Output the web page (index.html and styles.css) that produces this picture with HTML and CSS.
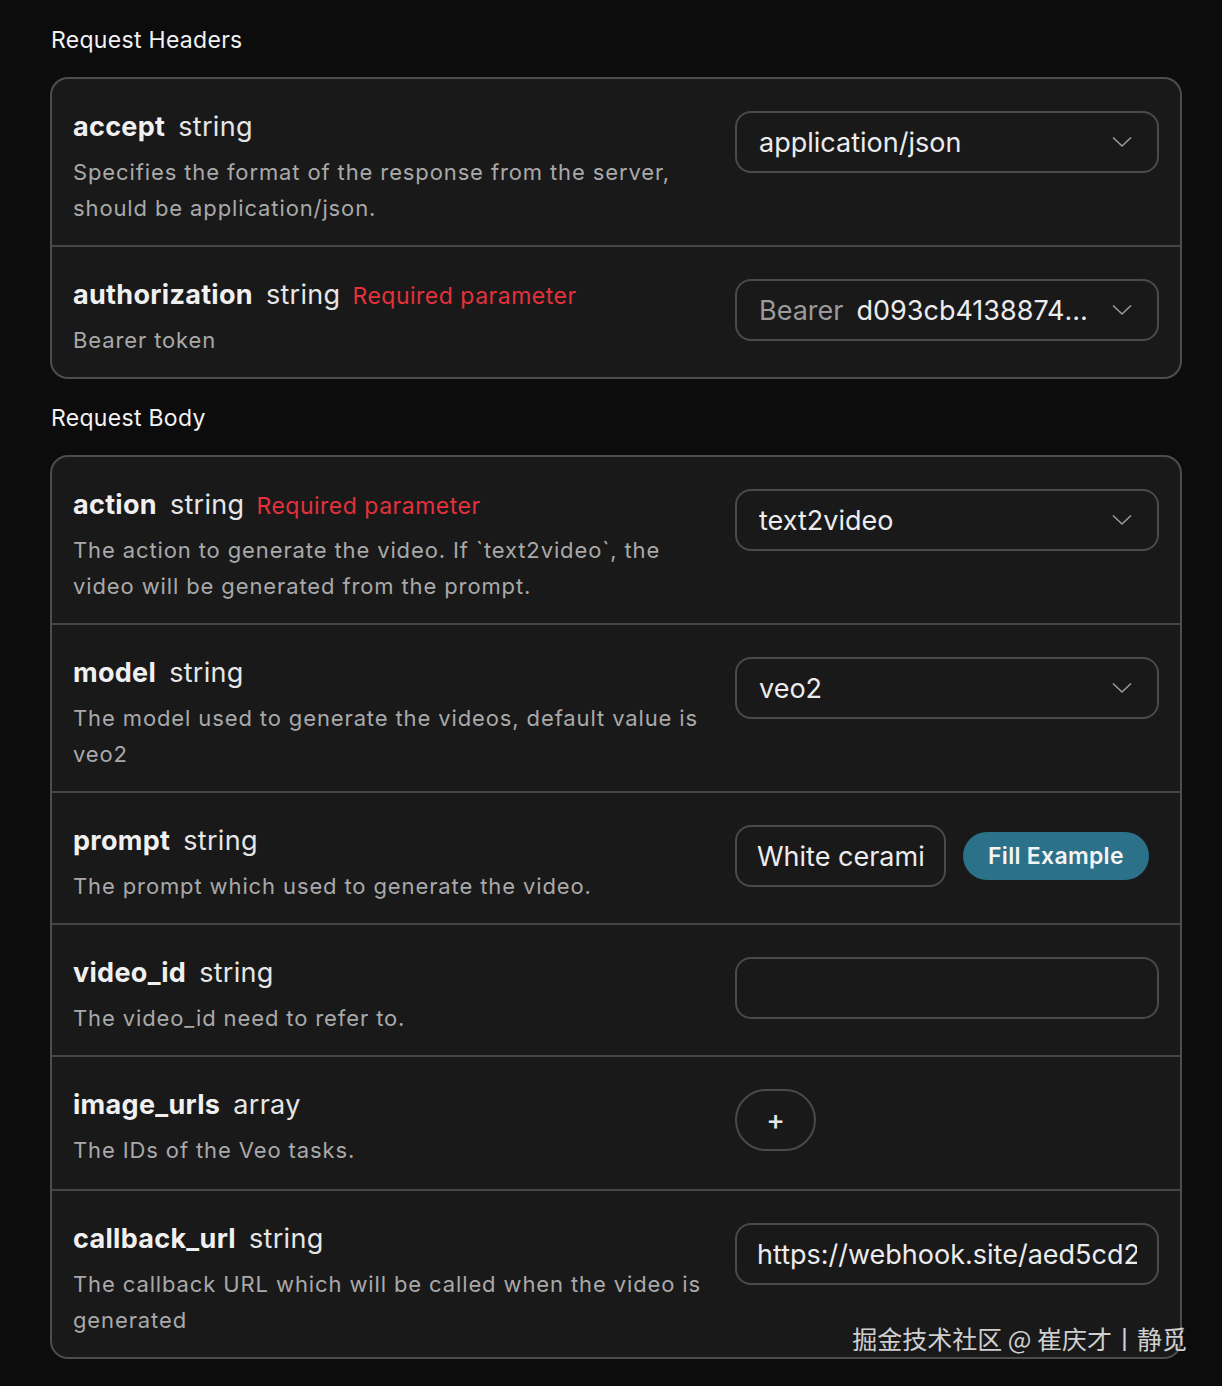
FILE: index.html
```html
<!DOCTYPE html>
<html>
<head>
<meta charset="utf-8">
<link rel="stylesheet" href="styles.css">
</head>
<body>
<div class="page">
  <h2 class="section-title">Request Headers</h2>
  <div class="card">
    <div class="row">
      <div class="info">
        <div class="name"><b>accept</b><span class="type">string</span></div>
        <p class="desc">Specifies the format of the response from the server, should be application/json.</p>
      </div>
      <div class="field">
        <div class="input select"><span class="value">application/json</span>
          <svg class="chev" viewBox="0 0 20 12" width="20" height="12"><path d="M1 1.5 L10 10 L19 1.5" fill="none" stroke="#9a9a9a" stroke-width="1.6"/></svg>
        </div>
      </div>
    </div>
    <div class="row">
      <div class="info">
        <div class="name"><b>authorization</b><span class="type">string</span><span class="req">Required parameter</span></div>
        <p class="desc">Bearer token</p>
      </div>
      <div class="field">
        <div class="input select"><span class="prefix">Bearer</span><span class="value ellip">d093cb4138874b3a8b4f2e</span>
          <svg class="chev" viewBox="0 0 20 12" width="20" height="12"><path d="M1 1.5 L10 10 L19 1.5" fill="none" stroke="#9a9a9a" stroke-width="1.6"/></svg>
        </div>
      </div>
    </div>
  </div>

  <h2 class="section-title">Request Body</h2>
  <div class="card">
    <div class="row">
      <div class="info">
        <div class="name"><b>action</b><span class="type">string</span><span class="req">Required parameter</span></div>
        <p class="desc">The action to generate the video. If `text2video`, the video will be generated from the prompt.</p>
      </div>
      <div class="field">
        <div class="input select"><span class="value">text2video</span>
          <svg class="chev" viewBox="0 0 20 12" width="20" height="12"><path d="M1 1.5 L10 10 L19 1.5" fill="none" stroke="#9a9a9a" stroke-width="1.6"/></svg>
        </div>
      </div>
    </div>
    <div class="row">
      <div class="info">
        <div class="name"><b>model</b><span class="type">string</span></div>
        <p class="desc">The model used to generate the videos, default value is veo2</p>
      </div>
      <div class="field">
        <div class="input select"><span class="value">veo2</span>
          <svg class="chev" viewBox="0 0 20 12" width="20" height="12"><path d="M1 1.5 L10 10 L19 1.5" fill="none" stroke="#9a9a9a" stroke-width="1.6"/></svg>
        </div>
      </div>
    </div>
    <div class="row">
      <div class="info">
        <div class="name"><b>prompt</b><span class="type">string</span></div>
        <p class="desc">The prompt which used to generate the video.</p>
      </div>
      <div class="field field-inline">
        <div class="input short"><span class="value clip">White ceramic coffee mug</span></div>
        <button class="fill-btn">Fill Example</button>
      </div>
    </div>
    <div class="row">
      <div class="info">
        <div class="name"><b>video_id</b><span class="type">string</span></div>
        <p class="desc">The video_id need to refer to.</p>
      </div>
      <div class="field">
        <div class="input"></div>
      </div>
    </div>
    <div class="row row-array">
      <div class="info">
        <div class="name"><b>image_urls</b><span class="type">array</span></div>
        <p class="desc">The IDs of the Veo tasks.</p>
      </div>
      <div class="field">
        <div class="add-btn">+</div>
      </div>
    </div>
    <div class="row">
      <div class="info">
        <div class="name"><b>callback_url</b><span class="type">string</span></div>
        <p class="desc">The callback URL which will be called when the video is generated</p>
      </div>
      <div class="field">
        <div class="input url"><span class="value clip">https://webhook.site/aed5cd2a-1b3c</span></div>
      </div>
    </div>
    <div class="watermark">掘金技术社区 @ 崔庆才丨静觅</div>
  </div>
</div>
</body>
</html>
```

FILE: styles.css
```css
html, body {
  margin: 0;
  padding: 0;
  background: #0c0c0c;
}
body {
  font-family: Inter, "Noto Sans", "Noto Sans CJK SC", sans-serif;
  color: #ececec;
}
.page {
  width: 1132px;
  margin-left: 50px;
  padding-top: 25px;
}
.section-title {
  margin: 0 0 22px 1px;
  font-size: 23px;
  line-height: 30px;
  font-weight: 400;
  letter-spacing: 0.3px;
  color: #f2f2f2;
}
.card {
  position: relative;
  background: #19191a;
  border: 2px solid #4d4d4d;
  border-radius: 18px;
  margin-bottom: 24px;
}
.row {
  display: flex;
  gap: 24px;
  padding: 32px 21px 19px 21px;
  border-top: 2px solid #454545;
}
.row:first-child {
  border-top: none;
}
.row-array {
  padding-bottom: 21px;
}
.info {
  flex: 1;
  min-width: 0;
}
.name {
  display: flex;
  align-items: baseline;
  height: 32px;
  line-height: 32px;
  font-size: 27px;
  color: #f0f0f0;
}
.name b {
  font-weight: 700;
  letter-spacing: 0.3px;
}
.type {
  margin-left: 13px;
  font-weight: 400;
  letter-spacing: 0.3px;
  color: #e6e6e6;
}
.req {
  margin-left: 12px;
  font-size: 23px;
  letter-spacing: 0.5px;
  color: #e5313b;
}
.desc {
  margin: 11px 0 0 0;
  font-size: 22px;
  line-height: 36px;
  color: #a9a9a9;
  letter-spacing: 0.88px;
}
.field {
  width: 424px;
  flex: none;
  padding-top: 0;
}
.field-inline {
  display: flex;
  align-items: center;
  gap: 17px;
  height: 62px;
}
.input {
  box-sizing: border-box;
  height: 62px;
  border: 2px solid #4a4a4a;
  border-radius: 16px;
  display: flex;
  align-items: center;
  padding: 0 22px;
  font-size: 27px;
  color: #ececec;
  background: #19191a;
  overflow: hidden;
}
.select .value {
  flex: 1;
  min-width: 0;
  white-space: nowrap;
}
.select .prefix {
  color: #9b9b9b;
  margin-right: 13px;
  white-space: nowrap;
}
.ellip {
  overflow: hidden;
  text-overflow: ellipsis;
}
.chev {
  flex: none;
  margin-left: 14px;
  margin-right: 3px;
}
.short {
  width: 211px;
  flex: none;
  padding: 0 20px;
}
.clip {
  white-space: nowrap;
  overflow: hidden;
}
.url {
  padding: 0 20px;
}
.fill-btn {
  height: 48px;
  padding: 0 25px;
  border: none;
  border-radius: 24px;
  background: #2a7189;
  color: #f4f4f4;
  font-family: Inter, "Noto Sans", sans-serif;
  font-size: 23px;
  font-weight: 600;
  letter-spacing: 0.3px;
}
.add-btn {
  box-sizing: border-box;
  width: 81px;
  height: 62px;
  border: 2px solid #4a4a4a;
  border-radius: 31px;
  display: flex;
  align-items: center;
  justify-content: center;
  font-size: 28px;
  font-weight: 500;
  color: #e6e6e6;
}
.watermark {
  position: absolute;
  right: -7px;
  bottom: 4px;
  font-family: "Noto Sans CJK SC", sans-serif;
  font-size: 25px;
  line-height: 30px;
  color: #cfcfcf;
  white-space: nowrap;
}
```
